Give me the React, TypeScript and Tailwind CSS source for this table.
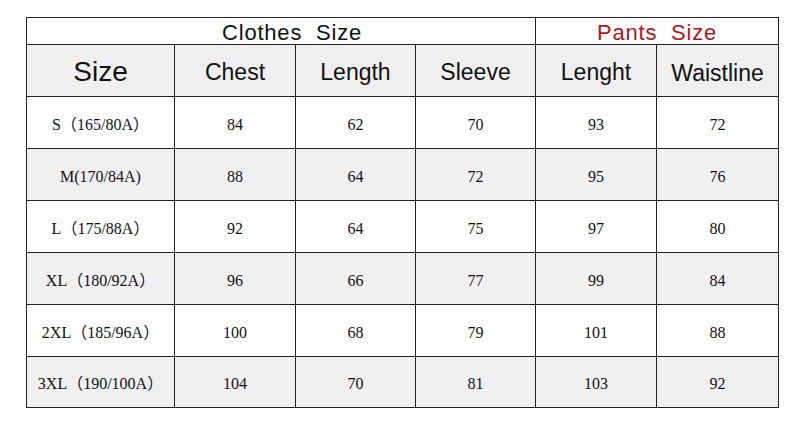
import React from 'react';

const rows = [
  { size: 'S（165/80A）', chest: 84, length: 62, sleeve: 70, pLen: 93, waist: 72 },
  { size: 'M(170/84A)', chest: 88, length: 64, sleeve: 72, pLen: 95, waist: 76 },
  { size: 'L（175/88A）', chest: 92, length: 64, sleeve: 75, pLen: 97, waist: 80 },
  { size: 'XL（180/92A）', chest: 96, length: 66, sleeve: 77, pLen: 99, waist: 84 },
  { size: '2XL（185/96A）', chest: 100, length: 68, sleeve: 79, pLen: 101, waist: 88 },
  { size: '3XL（190/100A）', chest: 104, length: 70, sleeve: 81, pLen: 103, waist: 92 },
];

const sans = "font-['Liberation_Sans',Arial,sans-serif]";
const cell = 'border border-[#222] text-center p-0';

const App: React.FC = () => {
  return (
    <div className="w-[806px] h-[424px] bg-white overflow-hidden pt-[17px] pl-[26px]">
      <table className="table-fixed border-collapse w-[752px] text-[#111]">
        <colgroup>
          <col className="w-[148px]" />
          <col className="w-[121px]" />
          <col className="w-[120px]" />
          <col className="w-[120px]" />
          <col className="w-[121px]" />
          <col className="w-[122px]" />
        </colgroup>
        <thead>
          <tr className="h-[27px] bg-white">
            <th colSpan={4} className={`${cell} ${sans} font-normal text-[22px] leading-none tracking-[0.8px] whitespace-pre pl-[22px] pt-[3px]`}>
              Clothes  Size
            </th>
            <th colSpan={2} className={`${cell} ${sans} font-normal text-[22px] leading-none tracking-[0.8px] whitespace-pre text-[#b5141c] pt-[3px]`}>
              Pants  Size
            </th>
          </tr>
          <tr className={`h-[52px] bg-[#efefef] ${sans}`}>
            <th className={`${cell} font-normal text-[28px] pt-[3px]`}>Size</th>
            <th className={`${cell} font-normal text-[23px] pt-[3px]`}>Chest</th>
            <th className={`${cell} font-normal text-[23px] pt-[3px]`}>Length</th>
            <th className={`${cell} font-normal text-[23px] pt-[3px]`}>Sleeve</th>
            <th className={`${cell} font-normal text-[23px] pt-[3px]`}>Lenght</th>
            <th className={`${cell} font-normal text-[23px] pt-[6px]`}>Waistline</th>
          </tr>
        </thead>
        <tbody className="font-['Liberation_Serif','Noto_Sans_CJK_SC',serif] text-[16px] text-[#111]">
          {rows.map((r, i) => (
            <tr key={r.size} className={`${i === 5 ? 'h-[51px]' : 'h-[52px]'} ${i % 2 === 1 ? 'bg-[#f0f0f0]' : 'bg-white'}`}>
              <td className={`${cell} pt-[4px]`}>{r.size}</td>
              <td className={`${cell} pt-[4px]`}>{r.chest}</td>
              <td className={`${cell} pt-[4px]`}>{r.length}</td>
              <td className={`${cell} pt-[4px]`}>{r.sleeve}</td>
              <td className={`${cell} pt-[4px]`}>{r.pLen}</td>
              <td className={`${cell} pt-[4px]`}>{r.waist}</td>
            </tr>
          ))}
        </tbody>
      </table>
    </div>
  );
};

export default App;
